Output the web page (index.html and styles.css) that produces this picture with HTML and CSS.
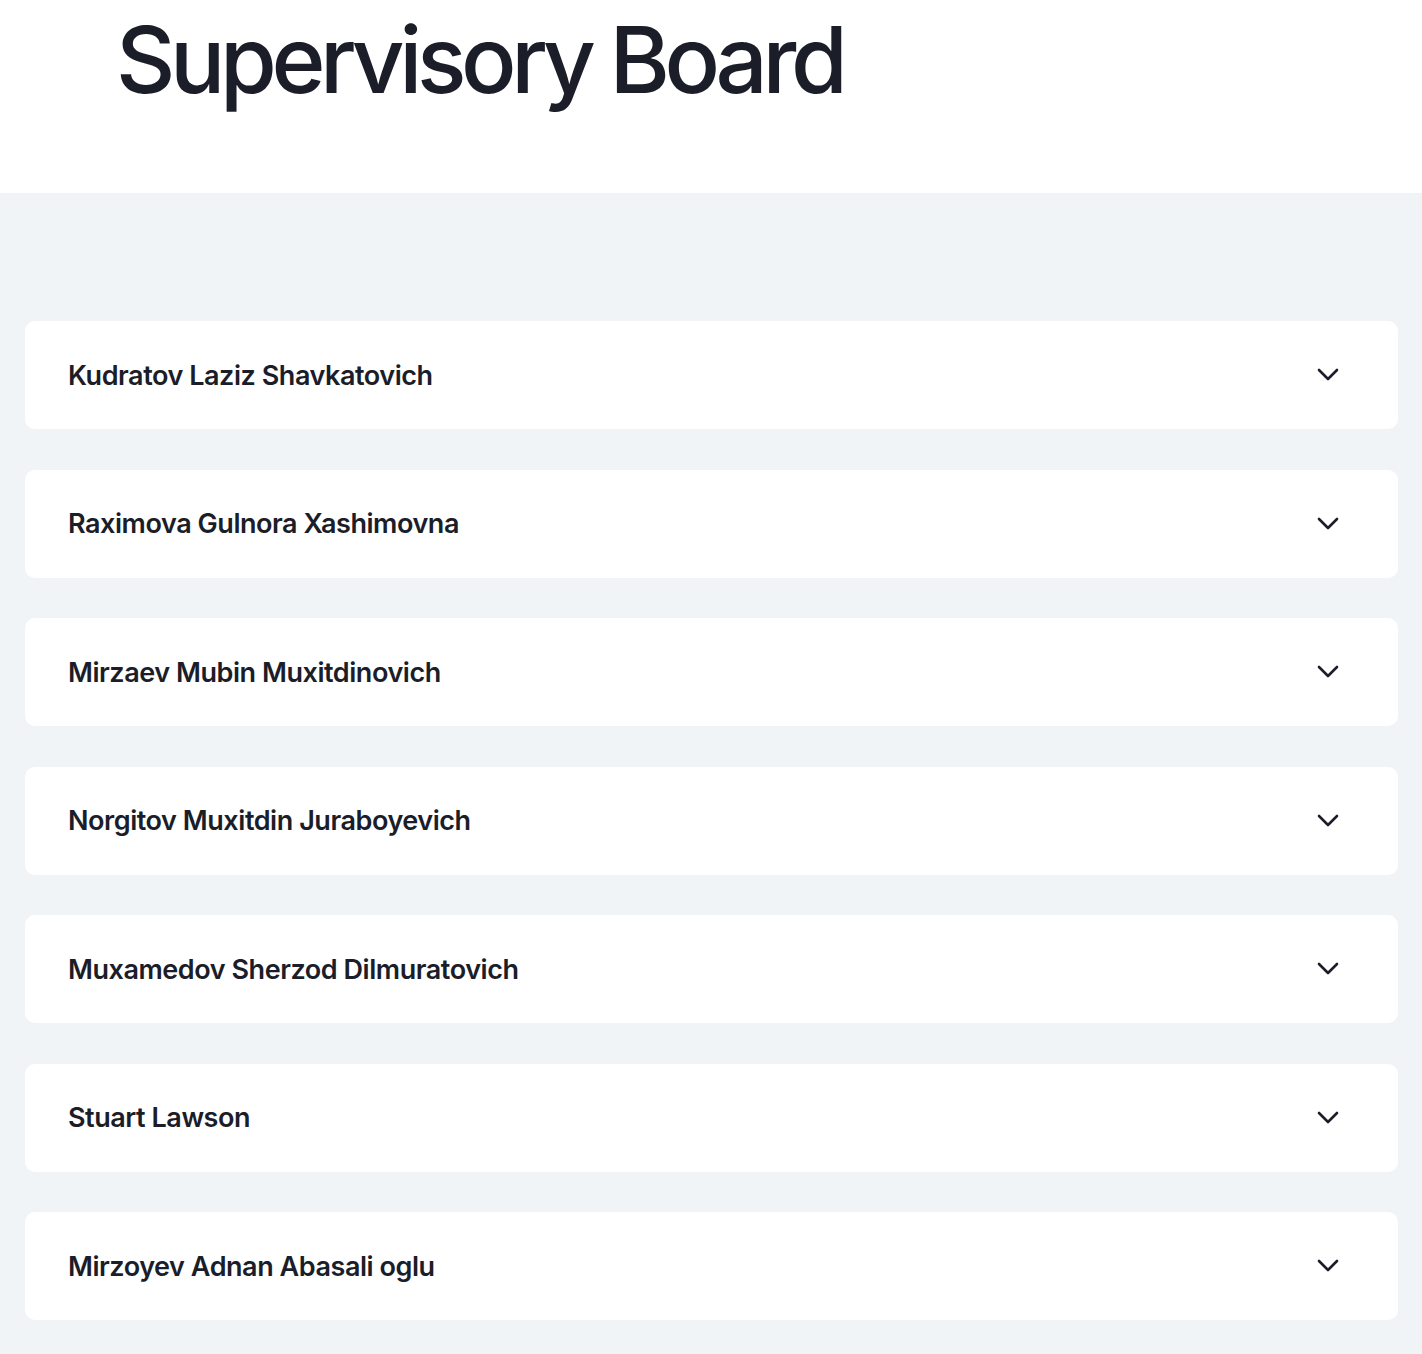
FILE: index.html
```html
<!DOCTYPE html>
<html lang="en">
  <head>
    <meta charset="UTF-8" />
    <meta name="viewport" content="width=device-width, initial-scale=1.0" />
    <title>Supervisory Board</title>
    <link rel="stylesheet" href="styles.css">
  </head>
  <body>
    <!-- Page header -->
    <header class="page-head">
      <h1>Supervisory Board</h1>
    </header>

    <section class="board">
      <div class="board-list">
        <div class="board-item">
          <span class="board-name">Kudratov Laziz Shavkatovich</span>
          <svg class="chevron" viewBox="0 0 24 24"><path d="M3 7l9 9 9-9" /></svg>
        </div>
        <div class="board-item">
          <span class="board-name">Raximova Gulnora Xashimovna</span>
          <svg class="chevron" viewBox="0 0 24 24"><path d="M3 7l9 9 9-9" /></svg>
        </div>
        <div class="board-item">
          <span class="board-name">Mirzaev Mubin Muxitdinovich</span>
          <svg class="chevron" viewBox="0 0 24 24"><path d="M3 7l9 9 9-9" /></svg>
        </div>
        <div class="board-item">
          <span class="board-name">Norgitov Muxitdin Juraboyevich</span>
          <svg class="chevron" viewBox="0 0 24 24"><path d="M3 7l9 9 9-9" /></svg>
        </div>
        <div class="board-item">
          <span class="board-name">Muxamedov Sherzod Dilmuratovich</span>
          <svg class="chevron" viewBox="0 0 24 24"><path d="M3 7l9 9 9-9" /></svg>
        </div>
        <div class="board-item">
          <span class="board-name">Stuart Lawson</span>
          <svg class="chevron" viewBox="0 0 24 24"><path d="M3 7l9 9 9-9" /></svg>
        </div>
        <div class="board-item">
          <span class="board-name">Mirzoyev Adnan Abasali oglu</span>
          <svg class="chevron" viewBox="0 0 24 24"><path d="M3 7l9 9 9-9" /></svg>
        </div>
      </div>
    </section>
  </body>
</html>
```

FILE: styles.css
```css
body {
  margin: 0;
  font-family: Inter, "Noto Sans", sans-serif;
  color: #1b1d29;
  background-color: #fff;
}

.page-head {
  height: 193px;
  padding-left: 116px;
  box-sizing: border-box;
}

.page-head h1 {
  margin: 0;
  font-size: 92px;
  font-weight: 500;
  line-height: 120px;
  letter-spacing: -5.4px;
}

.board {
  background-color: #f1f4f7;
  padding: 128px 24px 40px 25px;
}

.board-list {
  display: flex;
  flex-direction: column;
  gap: 40.5px;
}

.board-item {
  display: flex;
  align-items: center;
  justify-content: space-between;
  height: 108px;
  padding: 0 58px 0 43px;
  background-color: #fff;
  border-radius: 10px;
}

.board-name {
  font-size: 27px;
  font-weight: 600;
  letter-spacing: -0.45px;
}

.chevron {
  width: 24px;
  height: 24px;
  fill: none;
  stroke: #1b1d29;
  stroke-width: 2.6;
  stroke-linecap: round;
  stroke-linejoin: round;
}
```
